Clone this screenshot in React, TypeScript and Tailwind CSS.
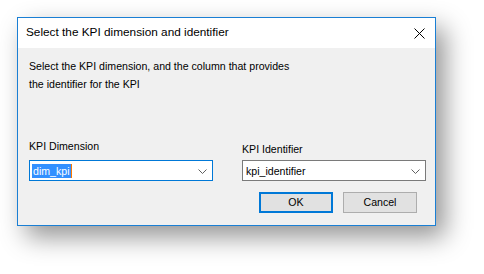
import React from 'react';

const Chevron = () => (
    <svg width="9" height="5" viewBox="0 0 9 5" className="shrink-0 mt-[2px]">
        <path d="M0.5 0.5 L4.5 4.5 L8.5 0.5" fill="none" stroke="#606060" strokeWidth="1" />
    </svg>
);

const App = () => {
    return (
        <div className="w-[484px] h-[274px] bg-white pt-[17px] pl-[17px] font-['Liberation_Sans',Arial,sans-serif] text-black">
            <div className="w-[419px] h-[209px] border border-[#1a7fd4] bg-[#f0f0f0] flex flex-col shadow-[9px_11px_24px_rgba(0,0,0,0.42)]">
                <div className="h-[30px] bg-white flex items-center justify-between pl-[8px] pr-[10px] shrink-0">
                    <span className="text-[11.8px] leading-none">Select the KPI dimension and identifier</span>
                    <svg width="11" height="11" viewBox="0 0 11 11">
                        <path d="M0.5 0.5 L10.5 10.5 M10.5 0.5 L0.5 10.5" stroke="#000" strokeWidth="1" />
                    </svg>
                </div>
                <div className="flex-1 flex flex-col pl-[11px] pr-[9px] pt-[9px] text-[10.6px]">
                    <p className="leading-[18px]">
                        Select the KPI dimension, and the column that provides<br />
                        the identifier for the KPI
                    </p>
                    <div className="flex gap-[29px] mt-[46px]">
                        <div className="w-[184px] flex flex-col">
                            <label className="leading-[14px] mb-[7px]">KPI Dimension</label>
                            <div className="h-[21px] border border-[#0078d7] bg-white flex items-center pl-[2px] pr-[5px]">
                                <span className="flex-1 flex items-center">
                                    <span className="bg-[#3390ff] text-white leading-[14px] px-[1px]">dim_kpi</span>
                                    <span className="w-[1px] h-[14px] bg-[#ff7b00]" />
                                </span>
                                <Chevron />
                            </div>
                        </div>
                        <div className="w-[184px] flex flex-col mt-[3px]">
                            <label className="leading-[14px] mb-[4px]">KPI Identifier</label>
                            <div className="h-[21px] border border-[#7a7a7a] bg-white flex items-center pl-[3px] pr-[5px]">
                                <span className="flex-1 leading-[14px]">kpi_identifier</span>
                                <Chevron />
                            </div>
                        </div>
                    </div>
                    <div className="flex justify-end gap-[10px] mt-[11px] pr-[9px]">
                        <button className="w-[74px] h-[21px] border-2 border-[#0078d7] bg-[#e1e1e1] leading-none">OK</button>
                        <button className="w-[74px] h-[21px] border border-[#adadad] bg-[#e1e1e1] leading-none">Cancel</button>
                    </div>
                </div>
            </div>
        </div>
    );
};

export default App;
